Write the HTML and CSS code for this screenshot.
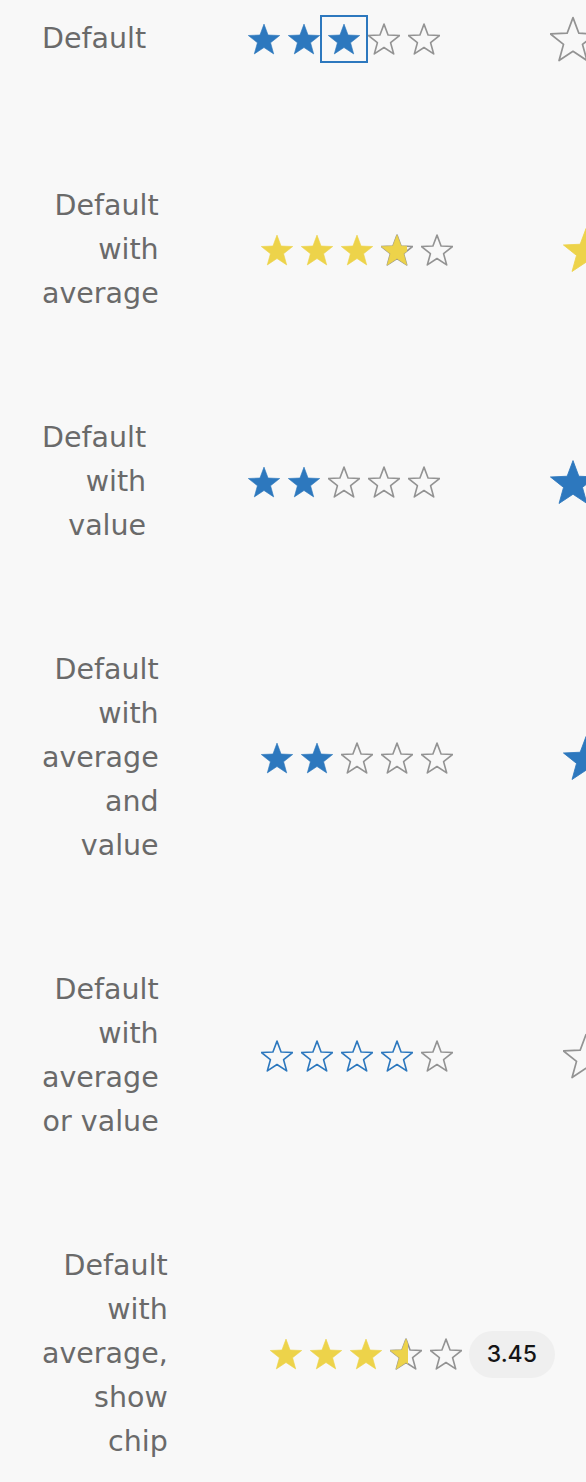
FILE: index.html
```html
<!doctype html>
<html lang="en">
    <head>
        <meta charset="UTF-8" />
        <meta name="viewport" content="width=device-width, initial-scale=1.0" />
        <title>Rating</title>
        <link rel="stylesheet" href="styles.css">
    </head>
    <body>
        <svg class="sprites" aria-hidden="true">
            <symbol id="star" viewBox="0 0 32 32">
                <path d="M16 1.1L20.07 11.99 31.69 12.5 22.59 19.74 25.7 30.95 16 24.53 6.3 30.95 9.41 19.74 0.31 12.5 11.93 11.99Z" />
            </symbol>
        </svg>

        <div class="demo">
            <div class="row">
                <div class="label">Default</div>
                <div class="rating" data-focus="3" data-value="3"></div>
                <div class="rating rating-l"></div>
            </div>

            <div class="row">
                <div class="label">Default with average</div>
                <div class="rating" data-average="3.65"></div>
                <div class="rating rating-l" data-average="3.65"></div>
            </div>

            <div class="row">
                <div class="label">Default with value</div>
                <div class="rating" data-value="2"></div>
                <div class="rating rating-l" data-value="2"></div>
            </div>

            <div class="row">
                <div class="label">Default with average and value</div>
                <div class="rating" data-value="2" data-average="4"></div>
                <div class="rating rating-l" data-value="2" data-average="4"></div>
            </div>

            <div class="row">
                <div class="label">Default with average or value</div>
                <div class="rating" data-hover="4"></div>
                <div class="rating rating-l"></div>
            </div>

            <div class="row">
                <div class="label">Default with average, show chip</div>
                <div class="rating" data-average="3.45" data-chip="true"></div>
                <div class="rating rating-l" data-average="3.45" data-chip="true"></div>
            </div>
        </div>

        <script>
            const starSvg = '<svg viewBox="0 0 32 32"><use href="#star" /></svg>';

            // Build the five stars of every rating from its data attributes
            document.querySelectorAll(".rating").forEach((rating) => {
                const value = Number(rating.dataset.value || 0);
                const average = Number(rating.dataset.average || 0);
                const hover = Number(rating.dataset.hover || 0);
                const focus = Number(rating.dataset.focus || 0);

                for (let i = 1; i <= 5; i++) {
                    const star = document.createElement("span");
                    star.className = "star";
                    star.innerHTML = starSvg;

                    if (value) {
                        if (i <= value) star.classList.add("selected");
                    } else if (hover) {
                        if (i <= hover) star.classList.add("hovered");
                    } else if (i <= average) {
                        star.classList.add("average");
                    } else if (i - 1 < average) {
                        // partial star: clip a filled copy over the outline
                        const part = document.createElement("span");
                        part.className = "star-part";
                        part.style.width = Math.round((average - i + 1) * 100) + "%";
                        part.innerHTML = starSvg;
                        star.appendChild(part);
                    }
                    if (i === focus) star.classList.add("focused");
                    rating.appendChild(star);
                }

                if (rating.dataset.chip) {
                    const chip = document.createElement("span");
                    chip.className = "chip";
                    chip.textContent = average;
                    rating.appendChild(chip);
                }
            });
        </script>
    </body>
</html>
```

FILE: styles.css
```css
body {
    margin: 0;
    padding: 0;
    background-color: #f8f8f8;
    font-family: "DejaVu Sans", sans-serif;
    overflow: hidden;
}
.sprites {
    display: none;
}
.demo {
    padding: 14px 0 0 42px;
}
.row {
    display: flex;
    align-items: center;
    gap: 98px;
    margin-bottom: 100px;
}
.row:first-child {
    margin-bottom: 120px;
}
.label {
    flex: none;
    width: min-content;
    text-align: right;
    color: #6a6a6a;
    font-size: 28.5px;
    line-height: 44px;
}
.rating {
    flex: none;
    display: flex;
    align-items: center;
}
.rating-l {
    margin-left: 6px;
}
.star {
    position: relative;
    display: block;
    width: 32px;
    height: 32px;
    padding: 4px;
}
.star svg {
    display: block;
    width: 32px;
    height: 32px;
    fill: none;
    stroke: #939393;
    stroke-width: 1.6;
    stroke-linejoin: round;
    overflow: visible;
}
.rating-l .star {
    width: 46px;
    height: 46px;
    padding: 2px;
}
.rating-l .star svg {
    width: 46px;
    height: 46px;
    stroke-width: 1.2;
}
.star.selected svg {
    fill: #2d78be;
    stroke: #2d78be;
    stroke-width: 0.6;
}
.star.hovered svg {
    stroke: #2d78be;
}
.star.average svg,
.star-part svg {
    fill: #edd34a;
    stroke: #edd34a;
    stroke-width: 0.6;
}
.star-part {
    position: absolute;
    top: 4px;
    left: 4px;
    height: 32px;
    overflow: hidden;
}
.rating-l .star-part {
    top: 2px;
    left: 2px;
    height: 46px;
}
.star.focused {
    outline: 2px solid #2d78be;
    outline-offset: 2px;
}
.chip {
    margin-left: 3px;
    padding: 0 18px;
    height: 47px;
    line-height: 47px;
    border-radius: 24px;
    background: #efefef;
    color: #151515;
    font-family: Inter, sans-serif;
    font-size: 23px;
    font-weight: 500;
}
```
